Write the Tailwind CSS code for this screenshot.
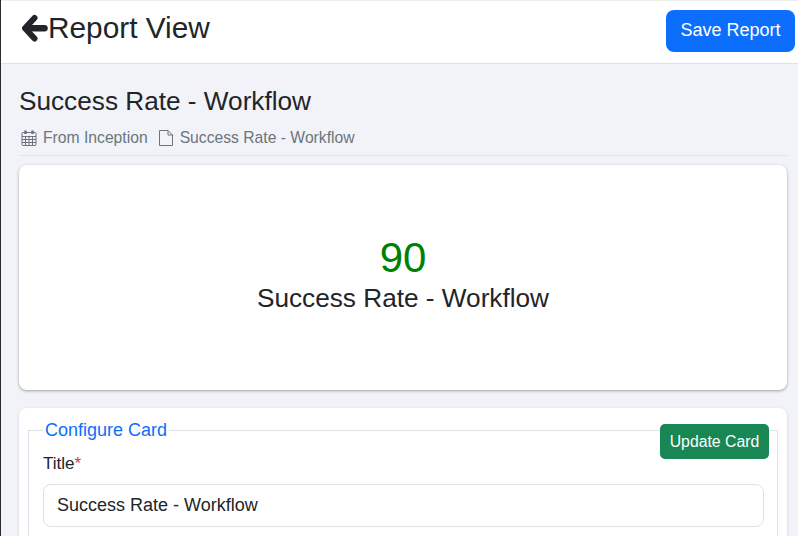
<!DOCTYPE html>
<html lang="en">
<head>
  <meta charset="UTF-8" />
  <title>Report View</title>
  <script src="https://cdn.jsdelivr.net/npm/@tailwindcss/browser@4"></script>
</head>
<body class="h-[536px] overflow-hidden bg-[#f1f3f8] border-l border-l-[#2b2b2b] font-['Liberation_Sans',Arial,sans-serif] text-[#212529]">

  <!-- Header -->
  <header class="h-[64px] bg-white border-t border-t-[#eeeeee] border-b border-b-[#dee2e6] flex justify-between items-start pl-[20px] pr-[3px]">
    <div class="flex items-center h-[54px]">
      <svg class="w-[27px] h-[28px] text-[#212529]" viewBox="0 0 27 28" fill="none" stroke="currentColor" stroke-linejoin="round" stroke-linecap="round"><path d="M13.5 4 4 14.2 13.5 24.5" stroke-width="6"/><path d="M6 14.2h17.5" stroke-width="6.5"/></svg>
      <h1 class="text-[29.8px] leading-[36px]">Report View</h1>
    </div>
    <button class="mt-[9px] w-[129px] h-[42px] pb-[2px] bg-[#0d6efd] text-white text-[18px] rounded-[8px]">Save Report</button>
  </header>

  <main class="pl-[18px] pr-[11px]">
    <!-- Title -->
    <div class="pt-[21px] pb-[5px] border-b border-b-[#dee2e6]">
      <h2 class="text-[26.2px] leading-[32px]">Success Rate - Workflow</h2>
      <div class="mt-[9px] flex items-center text-[15.7px] leading-[24px] text-[#6c757d]">
        <svg class="ml-[2px] w-[16px] h-[16px] mr-[6px]" viewBox="0 0 16 16" fill="none" stroke="currentColor"><rect x="1" y="2.5" width="14" height="13" rx="1"/><path d="M1 6.5h14M1 9.5h14M1 12.5h14M4.5 6.5v9M8 6.5v9M11.5 6.5v9"/><path d="M4.5 .5v3.5M11.5 .5v3.5" stroke-width="2.5"/></svg>
        <span>From Inception</span>
        <svg class="ml-[10px] w-[16px] h-[16px] mr-[6px]" viewBox="0 0 16 16" fill="none" stroke="currentColor"><path d="M1.5 .5H10L14.5 5V15.5H1.5zM10 .5V5h4.5"/></svg>
        <span>Success Rate - Workflow</span>
      </div>
    </div>

    <!-- Metric card -->
    <section class="mt-[9px] h-[225px] pb-[8px] bg-white rounded-[8px] shadow-[0_1px_3px_rgba(0,0,0,0.35)] flex flex-col items-center justify-center">
      <div class="text-[42px] leading-[49px] text-[#008000]">90</div>
      <div class="text-[26.2px] leading-[32px]">Success Rate - Workflow</div>
    </section>

    <!-- Configure card -->
    <section class="relative mt-[18px] h-[200px] bg-white rounded-[8px] shadow-[0_1px_3px_rgba(0,0,0,0.15)] px-[9px] pt-[11px]">
      <button class="absolute right-[18px] top-[16px] w-[109px] h-[35px] bg-[#198754] text-white text-[15.8px] rounded-[5px]">Update Card</button>
      <fieldset class="border border-[#dee2e6] pl-[14px] pr-[13px] h-[200px]">
        <legend class="ml-0 px-[2px] text-[18px] leading-[22px] text-[#0d6efd]">Configure Card</legend>
        <label class="block mt-[11px] text-[17px] leading-[24px]">Title<span class="text-[#dc3545]">*</span></label>
        <input class="mt-[8px] block w-full h-[43px] px-[13px] bg-white border border-[#dee2e6] rounded-[8px] text-[18px] text-[#212529]" value="Success Rate - Workflow" />
      </fieldset>
    </section>
  </main>
</body>
</html>
